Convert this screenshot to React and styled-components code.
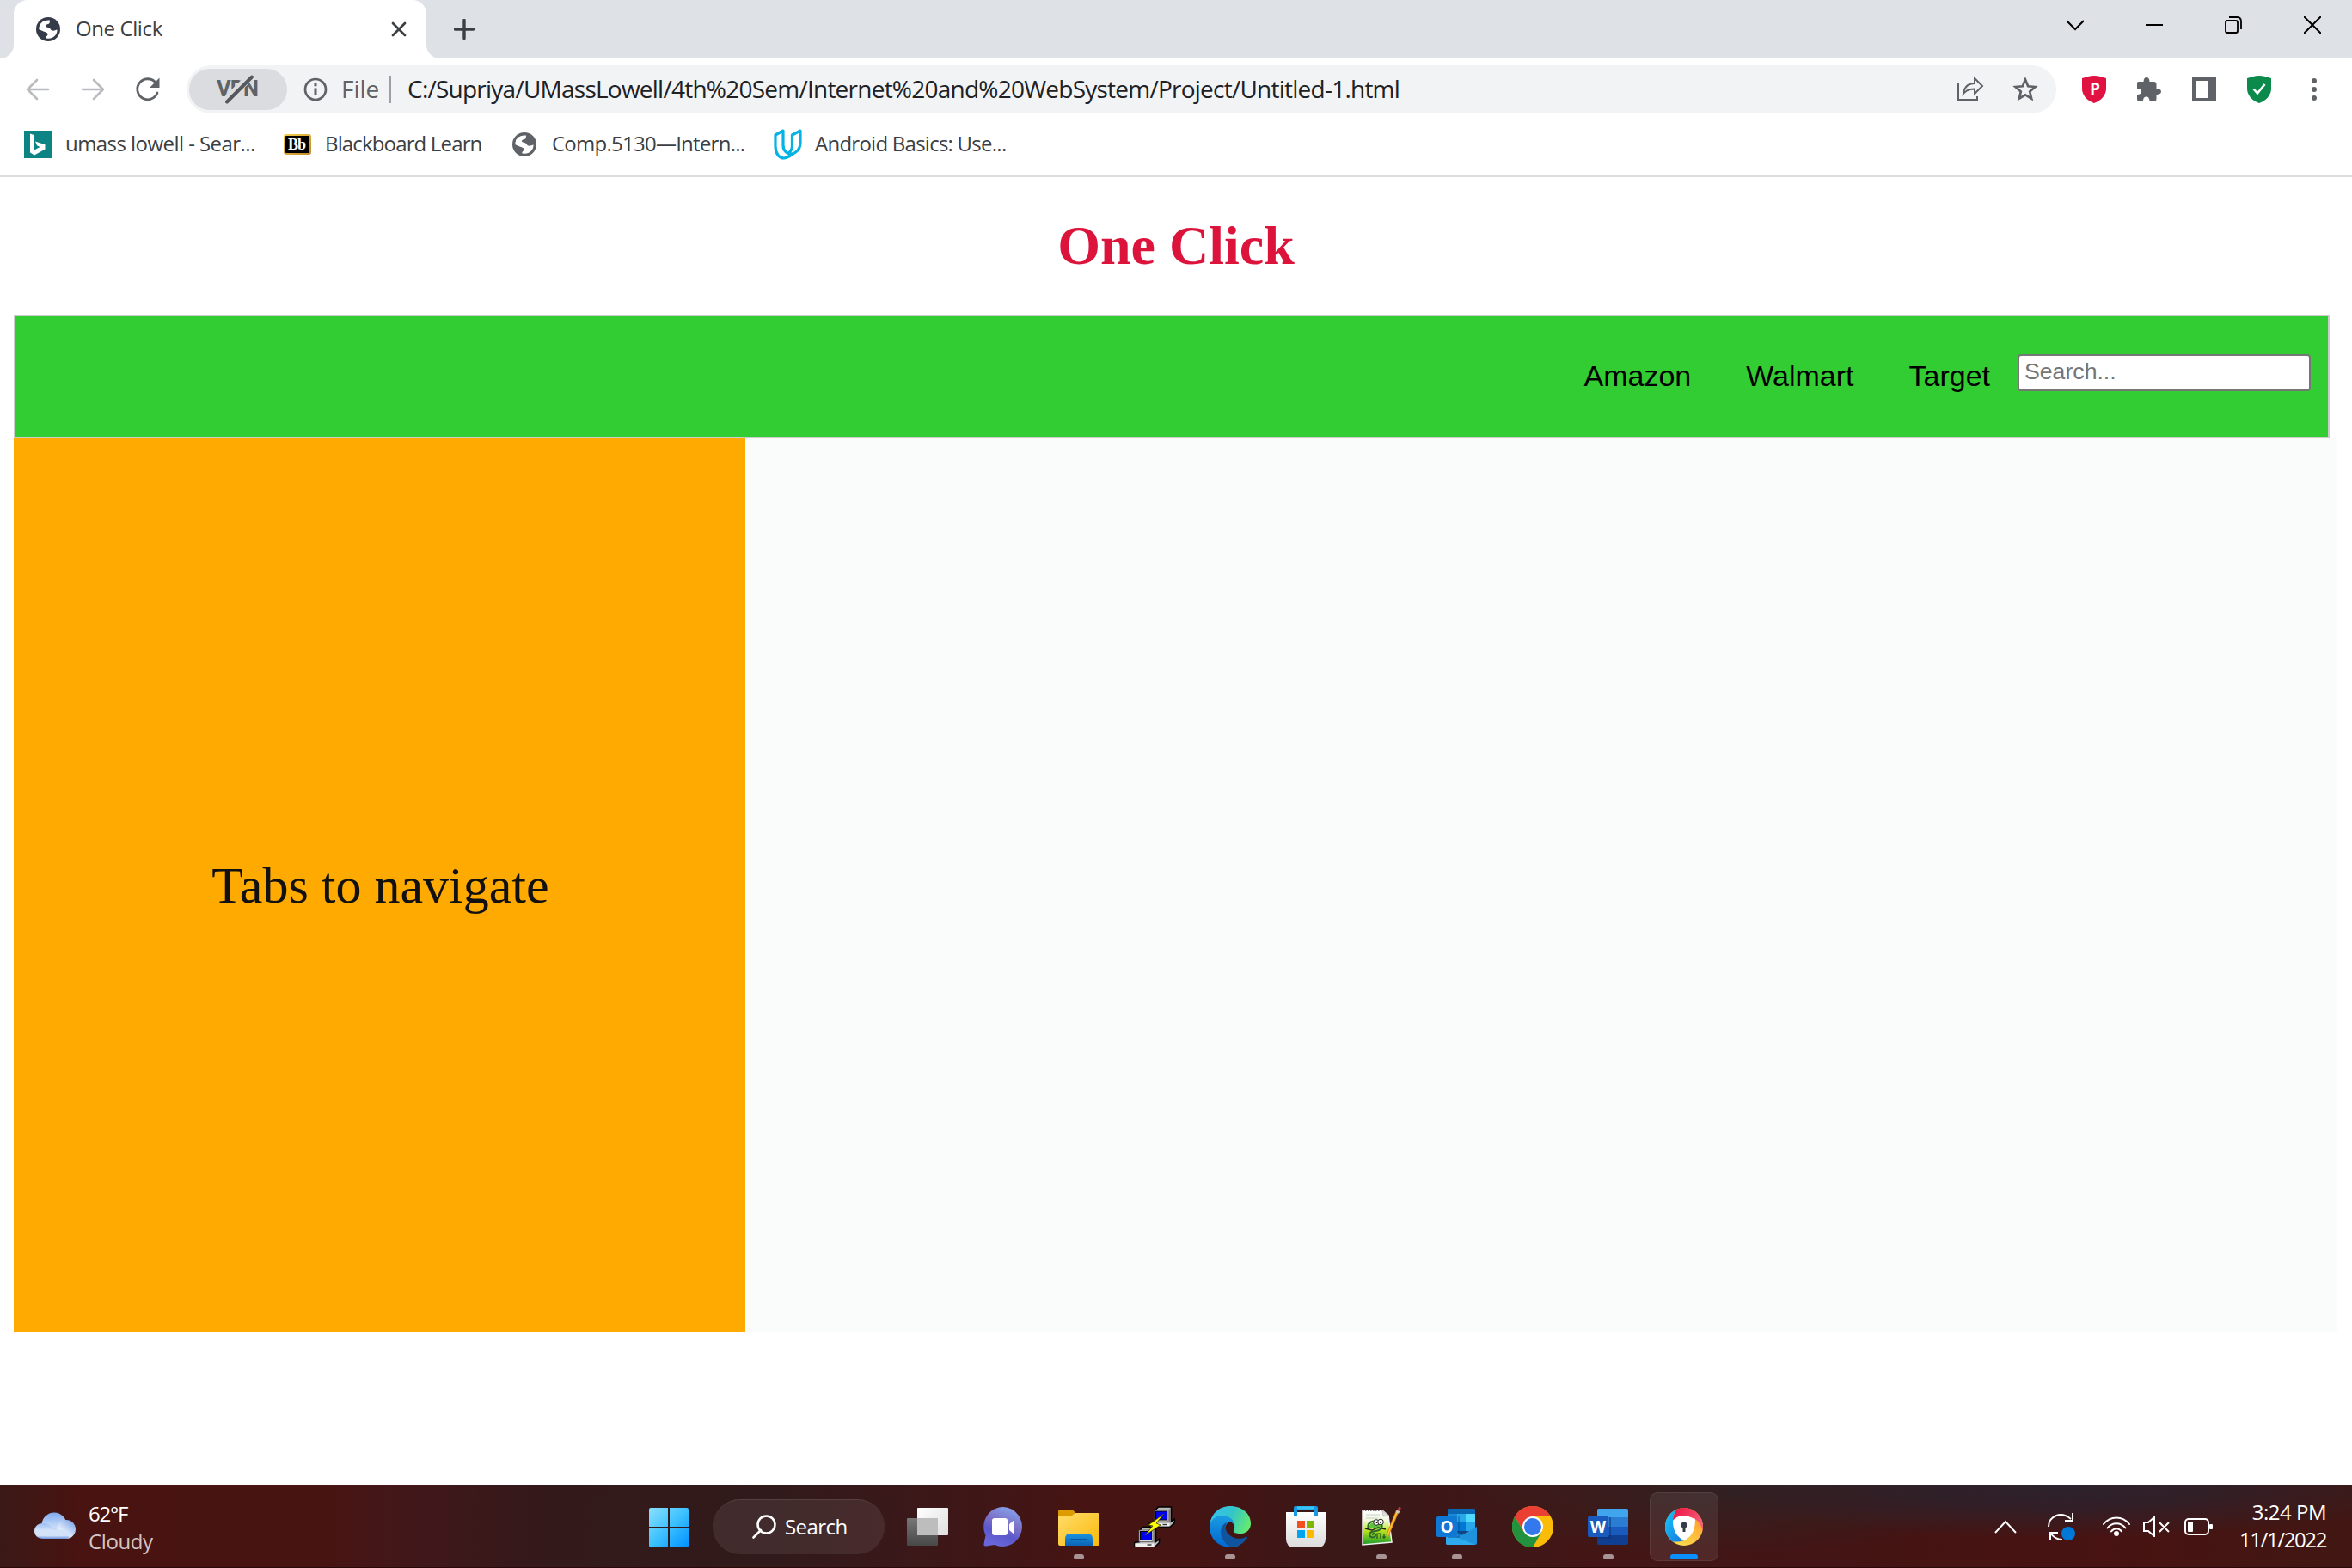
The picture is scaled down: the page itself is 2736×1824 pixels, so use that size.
import React from "react";
import styled, { createGlobalStyle } from "styled-components";

const Global = createGlobalStyle`
  * { box-sizing: border-box; }
  html, body { margin: 0; padding: 0; background: #fff; overflow: hidden; }
  svg { display: block; flex: none; }
`;

const UI = `"Open Sans", "Noto Sans", sans-serif`;

const Screen = styled.div`
  width: 2736px;
  height: 1824px;
  display: flex;
  flex-direction: column;
  background: #fff;
  overflow: hidden;
`;

/* ---------- browser chrome ---------- */

const TabStrip = styled.header`
  height: 68px;
  flex: none;
  display: flex;
  background: #dee1e6;
`;

const TabFlare = styled.div`
  width: 16px;
  height: 68px;
  background: radial-gradient(circle at ${(p) => (p.$side === "left" ? "0 52px" : "16px 52px")}, #dee1e6 15.5px, #fff 16.5px) 0 0 / 16px 68px no-repeat;
  clip-path: inset(52px 0 0 0);
`;

const Tab = styled.div`
  width: 480px;
  height: 68px;
  padding: 0 22px 0 26px;
  display: flex;
  align-items: center;
  background: #fff;
  border-radius: 16px 16px 0 0;
`;

const Label = styled.span`
  font-family: ${UI};
  font-size: ${(p) => p.$size || 24}px;
  line-height: 32px;
  letter-spacing: ${(p) => p.$track || 0}px;
  color: ${(p) => p.$color || "#3c4043"};
  white-space: nowrap;
`;

const ChromeLabel = styled(Label)`
  padding-bottom: 3px;
`;

const TabTitle = styled(ChromeLabel)`
  flex: 1;
  margin-left: 18px;
`;

const NewTab = styled.div`
  display: flex;
  align-items: center;
  margin-left: 16px;
`;

const WindowControls = styled.div`
  margin-left: auto;
  height: 58px;
  display: flex;
  align-items: center;
  gap: 72px;
  padding-right: 36px;
`;

const Toolbar = styled.div`
  height: 72px;
  flex: none;
  display: flex;
  align-items: center;
  padding: 0 26px 0 28px;
`;

const NavIcons = styled.div`
  display: flex;
  gap: 32px;
  width: 189px;
`;

const AddressBar = styled.div`
  width: 2175px;
  height: 56px;
  display: flex;
  align-items: center;
  padding-left: 3px;
  padding-right: 20px;
  border-radius: 28px;
  background: #f1f3f4;
`;

const VpnPill = styled.div`
  width: 114px;
  height: 48px;
  margin-right: 17px;
  padding: 0 3px 1px 0;
  display: flex;
  align-items: center;
  justify-content: center;
  border-radius: 24px;
  background: #dadce0;
`;

const VpnText = styled.text`
  font-family: Roboto, sans-serif;
  font-weight: 700;
  font-size: 26px;
  letter-spacing: -1px;
  fill: #5f6368;
`;

const Scheme = styled(ChromeLabel)`
  width: 56px;
  margin-left: 14px;
`;

const Divider = styled.div`
  width: 2px;
  height: 32px;
  margin-right: 19px;
  background: #9aa0a6;
`;

const AddressActions = styled.div`
  display: flex;
  align-items: center;
  gap: 32px;
  margin-left: auto;
`;

const Extensions = styled.div`
  flex: 1;
  display: flex;
  align-items: center;
  gap: 36px;
  padding-left: 30px;
`;

const Bookmarks = styled.nav`
  height: 66px;
  flex: none;
  display: flex;
  padding: 12px 28px 0;
  border-bottom: 2px solid #dadce0;
`;

const Bookmark = styled.div`
  width: ${(p) => p.$width}px;
  height: 32px;
  display: flex;
  align-items: center;
  gap: ${(p) => p.$gap}px;
`;

/* ---------- web page ---------- */

const Page = styled.main`
  height: 1522px;
  flex: none;
  padding: 43px 16px 0;
  background: #fff;
`;

const Heading = styled.h1`
  margin: 0 0 43px;
  height: 74px;
  line-height: 74px;
  font-family: "Liberation Serif", serif;
  font-size: 64px;
  font-weight: 700;
  text-align: center;
  color: #dc143c;
`;

const SiteNav = styled.div`
  width: 2694px;
  height: 144px;
  display: flex;
  align-items: flex-start;
  justify-content: flex-end;
  padding-right: 20px;
  border: 2px solid #ccc;
  background: #32cd32;
`;

const NavLink = styled.a`
  padding: 49px 32px 0;
  font-family: "Liberation Sans", sans-serif;
  font-size: 34px;
  line-height: 40px;
  color: #000;
`;

const SearchInput = styled.input`
  width: 341px;
  height: 43px;
  margin: 44px 0 0;
  padding: 0 6px 3px;
  border: 2px solid #767676;
  border-radius: 4px;
  background: #fff;
  font-family: "Liberation Sans", sans-serif;
  font-size: 26.67px;
  outline: none;

  &::placeholder {
    color: #757575;
    opacity: 1;
  }
`;

const Columns = styled.div`
  width: 2703px;
  height: 1040px;
  display: flex;
`;

const Sidebar = styled.aside`
  width: 851px;
  padding: 0 0 1px 2px;
  display: flex;
  align-items: center;
  justify-content: center;
  background: #ffaa00;
  font-family: "Liberation Serif", serif;
  font-size: 60px;
  line-height: 70px;
  color: #111;
`;

const Content = styled.section`
  flex: 1;
  background: #fafcfc;
`;

/* ---------- taskbar ---------- */

const Taskbar = styled.footer`
  height: 96px;
  flex: none;
  display: flex;
  align-items: stretch;
  border-bottom: 1px solid #2a0808;
  background:
    radial-gradient(ellipse 420px 62px at 2400px 0, rgba(42, 35, 46, 0.95) 0%, rgba(42, 35, 46, 0.7) 45%, rgba(60, 24, 26, 0) 100%),
    radial-gradient(ellipse 330px 80px at 2010px 0, rgba(47, 34, 36, 0.9) 0%, rgba(60, 24, 26, 0) 100%),
    linear-gradient(90deg, #3b1916 0, #481311 90px, #481412 380px, #42171a 470px, #33191a 640px, #311a1b 900px, #3b1819 1060px, #461413 1260px, #451413 1390px, #3a1818 1560px, #3e1718 1700px, #431615 1850px, #421615 2010px, #441413 2200px, #481312 2450px, #411713 2736px);
`;

const Weather = styled.div`
  width: 755px;
  padding: 17px 0 0 38px;
  display: flex;
  gap: 15px;
`;

const CloudBox = styled.div`
  padding-top: 14px;
`;

const Lines = styled.div`
  display: flex;
  flex-direction: column;
  align-items: ${(p) => p.$align || "flex-start"};
`;

const Start = styled.div`
  width: 74px;
  padding-top: 26px;
`;

const SearchPill = styled.div`
  width: 200px;
  height: 64px;
  margin-top: 16px;
  padding: 0 0 2px 46px;
  display: flex;
  align-items: center;
  gap: 10px;
  border-radius: 32px;
  border-top: 1px solid rgba(255, 255, 255, 0.1);
  background: rgba(255, 255, 255, 0.08);
`;

const Apps = styled.div`
  display: flex;
  gap: 8px;
  margin-left: 10px;
  padding-top: 8px;
`;

const AppTile = styled.div`
  width: 80px;
  height: 80px;
  display: flex;
  flex-direction: column;
  align-items: center;
  padding-top: ${(p) => (p.$active ? 15 : 16)}px;
  border-radius: 9px;
  border: ${(p) => (p.$active ? "1px solid rgba(255,255,255,.08)" : "0")};
  background: ${(p) => (p.$active ? "rgba(255,255,255,.08)" : "transparent")};
`;

const Indicator = styled.div`
  width: ${(p) => (p.$active ? 32 : 12)}px;
  height: 6px;
  margin-top: 8px;
  border-radius: 3px;
  background: ${(p) => (p.$active ? "#0a8fff" : "#a89494")};
`;

const Tray = styled.div`
  margin-left: auto;
  display: flex;
  align-items: center;
  padding-right: 30px;
`;

const TrayItem = styled.div`
  width: ${(p) => p.$width}px;
`;

const Clock = styled(Lines)`
  width: 131px;
  padding-bottom: 1px;
`;

/* ---------- icons ---------- */

const Globe = ({ color }) => (
  <svg width="28" height="28" viewBox="0 0 28 28">
    <circle cx="14" cy="14" r="14" fill={color} />
    <path d="M16 3.5 C15.5 5 16.5 6 15 7.5 C14 8.5 12 8 11 9.500 C10.500 11 12 11.500 14 12 C17 12.500 16.500 15 18.500 15.500 C21 16 22.500 15 24.500 14.500 C24.800 20 20 25 14 24.800 L11.500 24.500 C10.500 22 14 22 13.500 19.500 C13 17.500 11 17.500 8.500 16.500 C6.500 15.500 5 15 3.300 14 C3.300 8 8 2.800 16 3.500 Z" fill="#fff" />
    <path d="M4 14 C6 15 10 15 11 16.500 L11 12 L9 11 L9 7.500 L12.500 5 L8 5 L4 9 Z" fill="#fff" />
    <path d="M14.500 8.500 L21 6 L24 10 L24.500 13.500 L19 14 L16.500 11.500 Z" fill={color} />
  </svg>
);

const Stroke = ({ w, h, box, d, color = "#000", sw = 2, cap = "butt" }) => (
  <svg width={w} height={h} viewBox={box || `0 0 ${w} ${h}`}>
    <path d={d} fill="none" stroke={color} strokeWidth={sw} strokeLinecap={cap} strokeLinejoin={cap === "butt" ? "miter" : "round"} />
  </svg>
);

const Shield = ({ color, children }) => (
  <svg width="28" height="32" viewBox="0 0 28 32">
    <path d="M14 0 C19 0 23 1.500 28 3 V15 C28 23 22 29 14 32 C6 29 0 23 0 15 V3 C5 1.500 9 0 14 0 Z" fill={color} />
    {children}
  </svg>
);

const BingIcon = () => (
  <svg width="32" height="32" viewBox="0 0 32 32">
    <rect width="32" height="32" fill="#0c8484" />
    <path d="M7 3.500 L12 5.200 V22.500 L18.500 19 L15 17.300 L13 12.500 L24.500 16.300 V21.500 L12 28.500 L7 25.500 Z" fill="#fff" />
  </svg>
);

const BbText = styled.text`
  font-family: "Liberation Serif", serif;
  font-weight: 700;
  font-size: 18px;
  letter-spacing: -1px;
  fill: #fff;
`;

const BbIcon = () => (
  <svg width="32" height="24" viewBox="0 0 32 24">
    <defs>
      <linearGradient id="bb" x1="0" y1="0" x2="1" y2="1">
        <stop offset="0" stopColor="#f0cd46" /><stop offset="1" stopColor="#c88a2c" />
      </linearGradient>
    </defs>
    <rect x="1" y="1" width="30" height="22" rx="2" fill="#000" stroke="url(#bb)" strokeWidth="2" />
    <BbText x="5" y="18">Bb</BbText>
  </svg>
);

const UdacityIcon = () => (
  <svg width="34" height="36" viewBox="0 -1 34 36">
    <g fill="none" stroke="#02b3e4" strokeWidth="3.200" strokeLinejoin="round" strokeLinecap="round">
      <path d="M12 1 L3 6 V19 C3 27 7 33 13 33 C16 33 19 31 23 28.500 C17 28.500 12 25 12 18 Z" />
      <path d="M32 1 L22.500 6 V19 C22.500 23 21 25 18 27.500 C21 29 23 28.500 26 26.500 C30 24 32 20 32 15 Z" />
    </g>
  </svg>
);

const VpnIcon = () => (
  <svg width="50" height="38" viewBox="0 0 50 38">
    <VpnText x="1" y="27" textLength="48" lengthAdjust="spacingAndGlyphs">VPN</VpnText>
    <path d="M11 33 L39 5" stroke="#dadce0" strokeWidth="9" />
    <path d="M13 33.500 L42 4.500" stroke="#54585d" strokeWidth="4" strokeLinecap="round" />
  </svg>
);

const PuzzleIcon = () => (
  <svg width="28" height="30" viewBox="1.500 0 28 30">
    <path d="M3 6 H9 C9 2.500 10.500 1 12.500 1 C14.500 1 16 2.500 16 6 H21 Q24 6 24 9 V14 C27.500 14 29.500 15.500 29.500 17.500 C29.500 19.500 27.500 21 24 21 V26 Q24 29 21 29 H16 C16 25 14.500 23.500 12.300 23.500 C10 23.500 8.500 25 8.500 29 H4 Q1.500 29 1.500 26 V21 C5 21 6.500 19.500 6.500 17.500 C6.500 15.500 5 14 1.500 14 V8 Q1.500 6 3 6 Z" fill="#5f6368" />
  </svg>
);

const CloudIcon = () => (
  <svg width="50" height="32" viewBox="0 0 50 32">
    <defs>
      <linearGradient id="cl" x1="0" y1="0" x2="0" y2="1">
        <stop offset="0" stopColor="#7faaf2" /><stop offset="0.6" stopColor="#c9ddf8" /><stop offset="1" stopColor="#8fb0ea" />
      </linearGradient>
      <linearGradient id="cr" x1="1" y1="0" x2="0.2" y2="1">
        <stop offset="0" stopColor="#6f9ae6" /><stop offset="0.7" stopColor="#e2ecfb" /><stop offset="1" stopColor="#c5d9f7" />
      </linearGradient>
      <linearGradient id="cb" x1="0" y1="0" x2="0" y2="1">
        <stop offset="0" stopColor="#9bbdf3" /><stop offset="0.45" stopColor="#d3e2f9" /><stop offset="0.8" stopColor="#d3e2f9" /><stop offset="1" stopColor="#6a92dd" />
      </linearGradient>
    </defs>
    <circle cx="25" cy="15" r="14.500" fill="url(#cl)" />
    <circle cx="39" cy="20" r="11" fill="url(#cr)" />
    <path d="M12 13 C18 13 21 15 24 20 L38 21 C44 24 44 31 39 31 H12 C6 31 2 27 2 22 C2 17 6 13 12 13 Z" fill="url(#cb)" />
  </svg>
);

const WindowsIcon = () => (
  <svg width="46" height="46" viewBox="0 0 46 46">
    <defs>
      <linearGradient id="win" x1="0" y1="0" x2="1" y2="1">
        <stop offset="0" stopColor="#8be0ff" /><stop offset="0.5" stopColor="#3dc1ff" /><stop offset="1" stopColor="#0090ff" />
      </linearGradient>
    </defs>
    <path fill="url(#win)" d="M2 0H22V22H0V2Q0 0 2 0ZM24 0H44Q46 0 46 2V22H24ZM0 24H22V46H2Q0 46 0 44ZM24 24H46V44Q46 46 44 46H24Z" />
  </svg>
);

const TaskViewIcon = () => (
  <svg width="48" height="48" viewBox="0 0 48 48">
    <defs>
      <linearGradient id="tv" x1="0" y1="0" x2="1" y2="1"><stop offset="0" stopColor="#fff" /><stop offset="1" stopColor="#dedede" /></linearGradient>
      <linearGradient id="tg" x1="0" y1="0" x2="0" y2="1"><stop offset="0" stopColor="#777" /><stop offset="1" stopColor="#484848" /></linearGradient>
    </defs>
    <rect x="12" y="2" width="36" height="32" rx="1" fill="url(#tv)" />
    <rect x="0" y="14" width="36" height="32" rx="1" fill="url(#tg)" />
    <rect x="12" y="14" width="24" height="20" fill="#bdbdbd" />
  </svg>
);

const ChatIcon = () => (
  <svg width="48" height="48" viewBox="0 0 48 48">
    <defs>
      <linearGradient id="ch" x1="0.8" y1="0" x2="0.4" y2="1">
        <stop offset="0" stopColor="#86a8f0" /><stop offset="0.45" stopColor="#7b6fc6" /><stop offset="0.7" stopColor="#5b58cc" /><stop offset="1" stopColor="#6866d8" />
      </linearGradient>
    </defs>
    <path d="M24 1 A22.700 23 0 1 1 14 45 L4 46.500 Q1 47 1.500 44 L3.500 34 A22.700 23 0 0 1 24 1 Z" fill="url(#ch)" />
    <rect x="11" y="14" width="18" height="20" rx="3" fill="#fff" />
    <path d="M31 21 L37 16 V33 L31 28 Z" fill="#fff" />
  </svg>
);

const FolderIcon = () => (
  <svg width="48" height="48" viewBox="0 0 48 48">
    <defs>
      <linearGradient id="fo" x1="0" y1="0" x2="1" y2="1"><stop offset="0" stopColor="#ffdc6c" /><stop offset="1" stopColor="#fbb909" /></linearGradient>
      <linearGradient id="fb" x1="0" y1="0" x2="0" y2="1"><stop offset="0" stopColor="#1b94e0" /><stop offset="1" stopColor="#0c63b5" /></linearGradient>
    </defs>
    <path d="M0 6 Q0 4 2 4 H15 Q17 4 18.500 6 L22 11 H0 Z" fill="#dd9b00" />
    <path d="M0 11 H16 L20 8 H46 Q48 8 48 10 V44 Q48 46 46 46 H2 Q0 46 0 44 Z" fill="url(#fo)" />
    <path d="M8 46 V38 Q8 32 14 32 H34 Q40 32 40 38 V46 Z" fill="url(#fb)" />
    <rect x="14" y="38" width="20" height="2" rx="1" fill="#0a55a0" />
  </svg>
);

const PuttyComputer = ({ x, y }) => (
  <g transform={`translate(${x} ${y})`}>
    <path d="M4 3 L8 -1 H23 V16 L27 13 V17 L22 22 H-2 V17 L4 16 Z" fill="#b8b8b8" stroke="#000" strokeWidth="1.600" />
    <path d="M3.500 2.500 H19.500 V16 H3.500 Z" fill="#d9d9d9" stroke="#555" strokeWidth="0.800" />
    <rect x="5" y="4" width="13" height="10" fill="#0000f0" stroke="#000" />
    <path d="M-1 18 H21 V21.500 H-1 Z" fill="#f0f0f0" />
    <path d="M20.500 2 L22.500 0 V15.500 L20.500 17 Z" fill="#777" />
    <path d="M13 19.500 H18" stroke="#333" strokeWidth="1.400" />
  </g>
);

const PuttyIcon = () => (
  <svg width="48" height="48" viewBox="0 0 48 48">
    <PuttyComputer x="20.500" y="2" />
    <PuttyComputer x="2.500" y="25.500" />
    <path d="M35 9 L17 22 L22 23 L13 34 L31 22 L26 20 Z" fill="#ffff00" stroke="#4a4a00" strokeWidth="0.900" />
  </svg>
);

const EdgeIcon = () => (
  <svg width="48" height="48" viewBox="0 0 48 48">
    <defs>
      <linearGradient id="e1" x1="0" y1="0.300" x2="1" y2="0.600"><stop offset="0" stopColor="#35c1f1" /><stop offset="0.5" stopColor="#34c5c8" /><stop offset="1" stopColor="#66eb6e" /></linearGradient>
      <linearGradient id="e2" x1="0.5" y1="0" x2="0.4" y2="1"><stop offset="0" stopColor="#1b9de2" /><stop offset="1" stopColor="#0067cf" /></linearGradient>
    </defs>
    <path d="M0 24 C1 9 11 0 24 0 C38 0 48 9 48 20 C48 28 42 32 36 32 C30 32 27 30.500 28 28.500 C31 24 28 18 22 18 L10 14 Z" fill="url(#e1)" />
    <path d="M0 24 C1 15 8 11 15 11 C23 11 29 16 29.500 23 C29 19 25 18 22 19 C18 21 17 29 20 34 C24 41 34 42 40 38 L34 46 C30 48 26 48 23 48 C9 47 0 37 0 24 Z" fill="url(#e2)" />
    <path d="M20 19 C12 22 11 34 17 41 C21 47 26 48.500 32 46.500 C38 44.500 42 40 44 37 C44.500 36 43.500 35.500 42.500 36 C34 40 26 37 21.500 32 C18 28 18 23 20 19 Z" fill="#0f549c" />
  </svg>
);

const StoreIcon = () => (
  <svg width="48" height="48" viewBox="0 0 48 48">
    <defs>
      <linearGradient id="st" x1="0" y1="0" x2="0" y2="1"><stop offset="0" stopColor="#fff" /><stop offset="1" stopColor="#dcdcdc" /></linearGradient>
    </defs>
    <path d="M1 7 H47 V38 Q47 48 37 48 H11 Q1 48 1 38 Z" fill="url(#st)" />
    <path d="M12 11 V2 H36 V11" fill="none" stroke="#1697e0" strokeWidth="4" strokeLinejoin="round" />
    <path d="M14 2 H34" stroke="#38c4f8" strokeWidth="3.400" />
    <rect x="14" y="17" width="9" height="9" fill="#f25022" /><rect x="25" y="17" width="9" height="9" fill="#7fba00" />
    <rect x="14" y="28" width="9" height="9" fill="#00a4ef" /><rect x="25" y="28" width="9" height="9" fill="#ffb900" />
  </svg>
);

const NotepadIcon = () => (
  <svg width="48" height="48" viewBox="0 0 48 48">
    <defs>
      <linearGradient id="np" x1="0" y1="0" x2="0" y2="1"><stop offset="0" stopColor="#fff" /><stop offset="0.3" stopColor="#f2f8d8" /><stop offset="0.6" stopColor="#b6e21c" /><stop offset="1" stopColor="#159a2a" /></linearGradient>
    </defs>
    <path d="M2 5 H25 L32 11 L36 42 L2 45 Z" fill="url(#np)" stroke="#f2f2f2" strokeWidth="1.500" />
    <path d="M2 5 H25" stroke="#777" strokeWidth="2" strokeDasharray="1.500 1.500" />
    <path d="M25 5 L26 12 L32 11 Z" fill="#ddd" stroke="#aaa" strokeWidth="0.600" />
    <path d="M6 10 H22 M6 14 H20" stroke="#b9c7cf" strokeWidth="0.800" />
    <path d="M9 27 C6 18 16 16 20 19 C26 20 26 26 21 28 C16 30 10 29 10 33 C11 38 18 37 17 33 C16 31 13 32 14 34" fill="none" stroke="#2d6b28" strokeWidth="2" />
    <path d="M10 25 C9 20 16 18 19 20 L24 23 L20 27 Z" fill="#5cc33a" />
    <circle cx="18" cy="19" r="3.300" fill="#fff" stroke="#222" /><circle cx="23" cy="18.500" r="3.300" fill="#fff" stroke="#222" />
    <circle cx="18.500" cy="19" r="1" /><circle cx="23" cy="19" r="1" />
    <path d="M5 26 L13 28 L20 25 L29 27" fill="none" stroke="#222" strokeWidth="1.300" />
    <path d="M19 38 V32 H23 V38 M25 36 H29 M27 33 V38" fill="none" stroke="#254d22" strokeWidth="1.200" />
    <path d="M31 34 L43 5" stroke="#e58a10" strokeWidth="3.600" /><path d="M31 34 L42 7" stroke="#ffc93a" strokeWidth="1.400" />
    <path d="M43.500 6 L45.500 1.500" stroke="#bb3c48" strokeWidth="3" /><path d="M42.500 8 L43.500 5.500" stroke="#ccc" strokeWidth="3.600" />
  </svg>
);

const OfficeLetter = styled.text`
  font-family: "Open Sans", sans-serif;
  font-weight: 700;
  font-size: 19px;
  fill: #fff;
  text-anchor: middle;
`;

const OutlookIcon = () => (
  <svg width="48" height="48" viewBox="0 0 48 48">
    <rect x="13" y="3" width="32" height="36" rx="1" fill="#0a67b3" />
    <rect x="13" y="9" width="11" height="10" fill="#1a8ad6" /><rect x="24" y="9" width="10" height="10" fill="#28a8ea" /><rect x="34" y="9" width="11" height="10" fill="#50d9ff" />
    <rect x="24" y="19" width="10" height="10" fill="#0078d4" /><rect x="34" y="19" width="11" height="10" fill="#28a8ea" />
    <path d="M24 29 H45 V32 L32 36 Z" fill="#14447d" />
    <path d="M11 27 L29 34 L47 24 V43 Q47 45 45 45 H13 Q11 45 11 43 Z" fill="#1f92dd" />
    <path d="M11 31 L45 45 H13 Q11 45 11 43 Z" fill="#2eabee" />
    <path d="M13 36 H26 V12" fill="none" stroke="#06447d" strokeOpacity="0.400" strokeWidth="2" />
    <rect x="0" y="12" width="24" height="24" rx="2" fill="#0f78d4" />
    <OfficeLetter x="12" y="31">O</OfficeLetter>
  </svg>
);

const WordIcon = () => (
  <svg width="48" height="48" viewBox="0 0 48 48">
    <rect x="11" y="3" width="36" height="42" rx="2" fill="#103f91" />
    <path d="M11 13 H47 V5 Q47 3 45 3 H13 Q11 3 11 5 Z" fill="#41a5ee" />
    <rect x="11" y="13" width="36" height="11" fill="#2b7cd3" /><rect x="11" y="24" width="36" height="10" fill="#185abd" />
    <path d="M11 37 H26 V13" fill="none" stroke="#0b2f6d" strokeOpacity="0.500" strokeWidth="2" />
    <rect x="0" y="12" width="24" height="24" rx="2" fill="#185abd" />
    <OfficeLetter x="12" y="31">W</OfficeLetter>
  </svg>
);

const ChromeIcon = () => (
  <svg width="48" height="48" viewBox="0 0 48 48">
    <circle cx="24" cy="24" r="24" fill="#fbbc09" />
    <path d="M3.200 12 A24 24 0 0 0 24 48 L34.400 30 L24 24 L13.600 30 Z" fill="#23923f" />
    <path d="M3.200 12 A24 24 0 0 1 44.800 12 H24 L13.600 30 Z" fill="#e94033" />
    <circle cx="24" cy="24" r="12" fill="#fff" /><circle cx="24" cy="24" r="10" fill="#3478ee" />
  </svg>
);

const SecureIcon = () => (
  <svg width="48" height="48" viewBox="0 0 48 48">
    <defs>
      <linearGradient id="s1" x1="0" y1="0" x2="1" y2="1"><stop offset="0" stopColor="#15d1fa" /><stop offset="1" stopColor="#1676e0" /></linearGradient>
      <linearGradient id="s2" x1="0" y1="0" x2="1" y2="0.500"><stop offset="0" stopColor="#ee0b3e" /><stop offset="1" stopColor="#f2607b" /></linearGradient>
      <linearGradient id="s3" x1="1" y1="0" x2="0.500" y2="1"><stop offset="0" stopColor="#ff861c" /><stop offset="1" stopColor="#ffd94e" /></linearGradient>
      <clipPath id="sc"><circle cx="24" cy="24" r="22" /></clipPath>
    </defs>
    <g clipPath="url(#sc)">
      <rect width="48" height="48" fill="url(#s3)" />
      <path d="M0 0 H20 C13 5 10 13 12 22 C13 31 18 37 24 40 C17 42 12 42 6 40 L0 32 Z" fill="url(#s1)" />
      <path d="M11 17 C12 8 15 3 19 0 H48 V26 C45 31 45 25 42 20 C38 13 24 8 11 17 Z" fill="url(#s2)" />
    </g>
    <path d="M24 11 C29 11 33 14 37 15 C37 27 34 35 24 40 C14 35 11 27 11 17 C14 13 19 11 24 11 Z" fill="#fff" />
    <circle cx="24" cy="22" r="3.500" fill="#343b49" /><rect x="22.500" y="23" width="3" height="7" fill="#343b49" />
  </svg>
);

const WifiIcon = () => (
  <svg width="34" height="26" viewBox="0 0 34 26">
    <g fill="none" stroke="#fff" strokeWidth="2" strokeLinecap="round">
      <path d="M2 10 C10 0 24 0 32 10 M6.500 14.500 C12 7.500 22 7.500 27.500 14.500 M11 18.500 C14 14 20 14 23 18.500" />
    </g>
    <circle cx="17" cy="21" r="3" fill="#fff" />
  </svg>
);

const apps = [
  { Icon: TaskViewIcon },
  { Icon: ChatIcon },
  { Icon: FolderIcon, open: true },
  { Icon: PuttyIcon },
  { Icon: EdgeIcon, open: true },
  { Icon: StoreIcon },
  { Icon: NotepadIcon, open: true },
  { Icon: OutlookIcon, open: true },
  { Icon: ChromeIcon },
  { Icon: WordIcon, open: true },
  { Icon: SecureIcon, open: true, active: true },
];

const PinLetter = styled.text`
  font-family: "Open Sans", sans-serif;
  font-weight: 700;
  font-size: 19px;
  fill: #fff;
`;

export default function App() {
  return (
    <Screen>
      <Global />
      <TabStrip>
        <TabFlare $side="left" />
        <Tab>
          <Globe color="#353b48" />
          <TabTitle $track={-0.4}>One Click</TabTitle>
          <Stroke w={20} h={20} d="M3 3 L17 17 M17 3 L3 17" color="#3c4043" sw={2.800} cap="round" />
        </Tab>
        <TabFlare $side="right" />
        <NewTab>
          <Stroke w={24} h={24} d="M12 1.500 V22.500 M1.500 12 H22.500" color="#3c4043" sw={3.400} cap="round" />
        </NewTab>
        <WindowControls>
          <Stroke w={20} h={20} box="-1 0 20 20" d="M-1 5 L9 15 L19 5" />
          <Stroke w={20} h={20} d="M0 10 H20" />
          <Stroke w={20} h={20} d="M3 5 H13 Q15 5 15 7 V17 Q15 19 13 19 H3 Q1 19 1 17 V7 Q1 5 3 5 Z M5 1 H14 Q19 1 19 6 V15" sw={1.800} />
          <Stroke w={20} h={20} d="M0 0 L20 20 M20 0 L0 20" />
        </WindowControls>
      </TabStrip>

      <Toolbar>
        <NavIcons>
          <Stroke w={32} h={32} d="M28 16 H4 M15 5 L4 16 L15 27" color="#b9bbbe" sw={2.600} cap="round" />
          <Stroke w={32} h={32} d="M4 16 H28 M17 5 L28 16 L17 27" color="#b9bbbe" sw={2.600} cap="round" />
          <svg width="32" height="32" viewBox="0 0 32 32">
            <path d="M27 20 A12 12 0 1 1 24.500 7.500" fill="none" stroke="#5f6368" strokeWidth="2.800" strokeLinecap="round" />
            <path d="M29.500 2.500 V14 H18 Z" fill="#5f6368" />
          </svg>
        </NavIcons>
        <AddressBar>
          <VpnPill><VpnIcon /></VpnPill>
          <svg width="32" height="32" viewBox="0 0 32 32">
            <circle cx="16" cy="16" r="12" fill="none" stroke="#5f6368" strokeWidth="2.700" />
            <path d="M16 14.500 V22.500 M16 9 V12.200" stroke="#5f6368" strokeWidth="3" />
          </svg>
          <Scheme $size={28} $color="#5f6368">File</Scheme>
          <Divider />
          <ChromeLabel $size={28} $track={-0.76} $color="#202124">
            C:/Supriya/UMassLowell/4th%20Sem/Internet%20and%20WebSystem/Project/Untitled-1.html
          </ChromeLabel>
          <AddressActions>
            <Stroke w={32} h={32} d="M2 9 V28 H24 V24 M8 21 C9 13 13 9 21 9 V3 L30 12 L21 21 V15.500 C15 15.500 11 17 8 21 Z" color="#5f6368" />
            <Stroke w={32} h={32} d="M16 4.500 L19.200 12.300 L27.500 13 L21.200 18.500 L23.200 26.700 L16 22.300 L8.800 26.700 L10.800 18.500 L4.500 13 L12.800 12.300 Z" color="#5f6368" sw={2.700} />
          </AddressActions>
        </AddressBar>
        <Extensions>
          <Shield color="#df1241"><PinLetter x="9" y="22">P</PinLetter></Shield>
          <PuzzleIcon />
          <svg width="28" height="28" viewBox="0 0 28 28">
            <path fillRule="evenodd" d="M0 0 H28 V28 H0 Z M4 4 V24 H18 V4 Z" fill="#5f6368" />
          </svg>
          <Shield color="#0b8a4b"><path d="M7.500 15.500 L12 20.500 L20.500 10" fill="none" stroke="#fff" strokeWidth="2.600" /></Shield>
          <svg width="28" height="28" viewBox="0 0 28 28">
            <g fill="#5f6368"><circle cx="14" cy="4" r="3" /><circle cx="14" cy="14" r="3" /><circle cx="14" cy="24" r="3" /></g>
          </svg>
        </Extensions>
      </Toolbar>

      <Bookmarks>
        <Bookmark $width={302} $gap={16}><BingIcon /><ChromeLabel $track={-0.55}>umass lowell - Sear...</ChromeLabel></Bookmark>
        <Bookmark $width={266} $gap={16}><BbIcon /><ChromeLabel $track={-0.85}>Blackboard Learn</ChromeLabel></Bookmark>
        <Bookmark $width={303} $gap={18}><Globe color="#5f6368" /><ChromeLabel $track={-0.75}>Comp.5130—Intern...</ChromeLabel></Bookmark>
        <Bookmark $width={300} $gap={15}><UdacityIcon /><ChromeLabel $track={-0.75}>Android Basics: Use...</ChromeLabel></Bookmark>
      </Bookmarks>

      <Page>
        <Heading>One Click</Heading>
        <SiteNav>
          <NavLink>Amazon</NavLink>
          <NavLink>Walmart</NavLink>
          <NavLink>Target</NavLink>
          <SearchInput placeholder="Search..." />
        </SiteNav>
        <Columns>
          <Sidebar>Tabs to navigate</Sidebar>
          <Content />
        </Columns>
      </Page>

      <Taskbar>
        <Weather>
          <CloudBox><CloudIcon /></CloudBox>
          <Lines>
            <Label $color="#fff" $track={-1.2}>62°F</Label>
            <Label $color="#d3c5c4" $track={-0.4}>Cloudy</Label>
          </Lines>
        </Weather>
        <Start><WindowsIcon /></Start>
        <SearchPill>
          <Stroke w={28} h={28} d="M1.500 26.500 L10 18 M6.500 11.500 A10 10 0 1 0 26.500 11.500 A10 10 0 1 0 6.500 11.500" color="#fff" sw={2.600} cap="round" />
          <Label $color="#fff" $track={-0.55}>Search</Label>
        </SearchPill>
        <Apps>
          {apps.map(({ Icon, open, active }, i) => (
            <AppTile key={i} $active={active}>
              <Icon />
              {open && <Indicator $active={active} />}
            </AppTile>
          ))}
        </Apps>
        <Tray>
          <TrayItem $width={61}><Stroke w={26} h={16} d="M1 15 L13 2 L25 15" color="#fff" /></TrayItem>
          <TrayItem $width={64}>
            <svg width="34" height="34" viewBox="0 0 34 34">
              <path d="M2 17 C2 5 16 -2 28 8 M30 1 V10 H21 M4 32 V24 H13 M4 24 C8 30 13 32 18 32" fill="none" stroke="#fff" strokeWidth="2" />
              <circle cx="25" cy="25" r="8" fill="#0078d7" />
            </svg>
          </TrayItem>
          <TrayItem $width={48}><WifiIcon /></TrayItem>
          <TrayItem $width={48}><Stroke w={32} h={24} d="M1 7 H6 L13 1 V23 L6 17 H1 Z M19 7 L30 18 M30 7 L19 18" color="#fff" /></TrayItem>
          <TrayItem $width={34}>
            <svg width="34" height="22" viewBox="0 0 34 22">
              <rect x="1" y="2" width="27" height="18" rx="4" fill="none" stroke="#fff" strokeWidth="2" />
              <rect x="4" y="5" width="6" height="12" rx="1" fill="#fff" /><rect x="29" y="8" width="4" height="6" rx="1" fill="#fff" />
            </svg>
          </TrayItem>
          <Clock $align="flex-end">
            <Label $color="#fff" $track={-0.5}>3:24 PM</Label>
            <Label $color="#fff" $track={-1.4}>11/1/2022</Label>
          </Clock>
        </Tray>
      </Taskbar>
    </Screen>
  );
}
